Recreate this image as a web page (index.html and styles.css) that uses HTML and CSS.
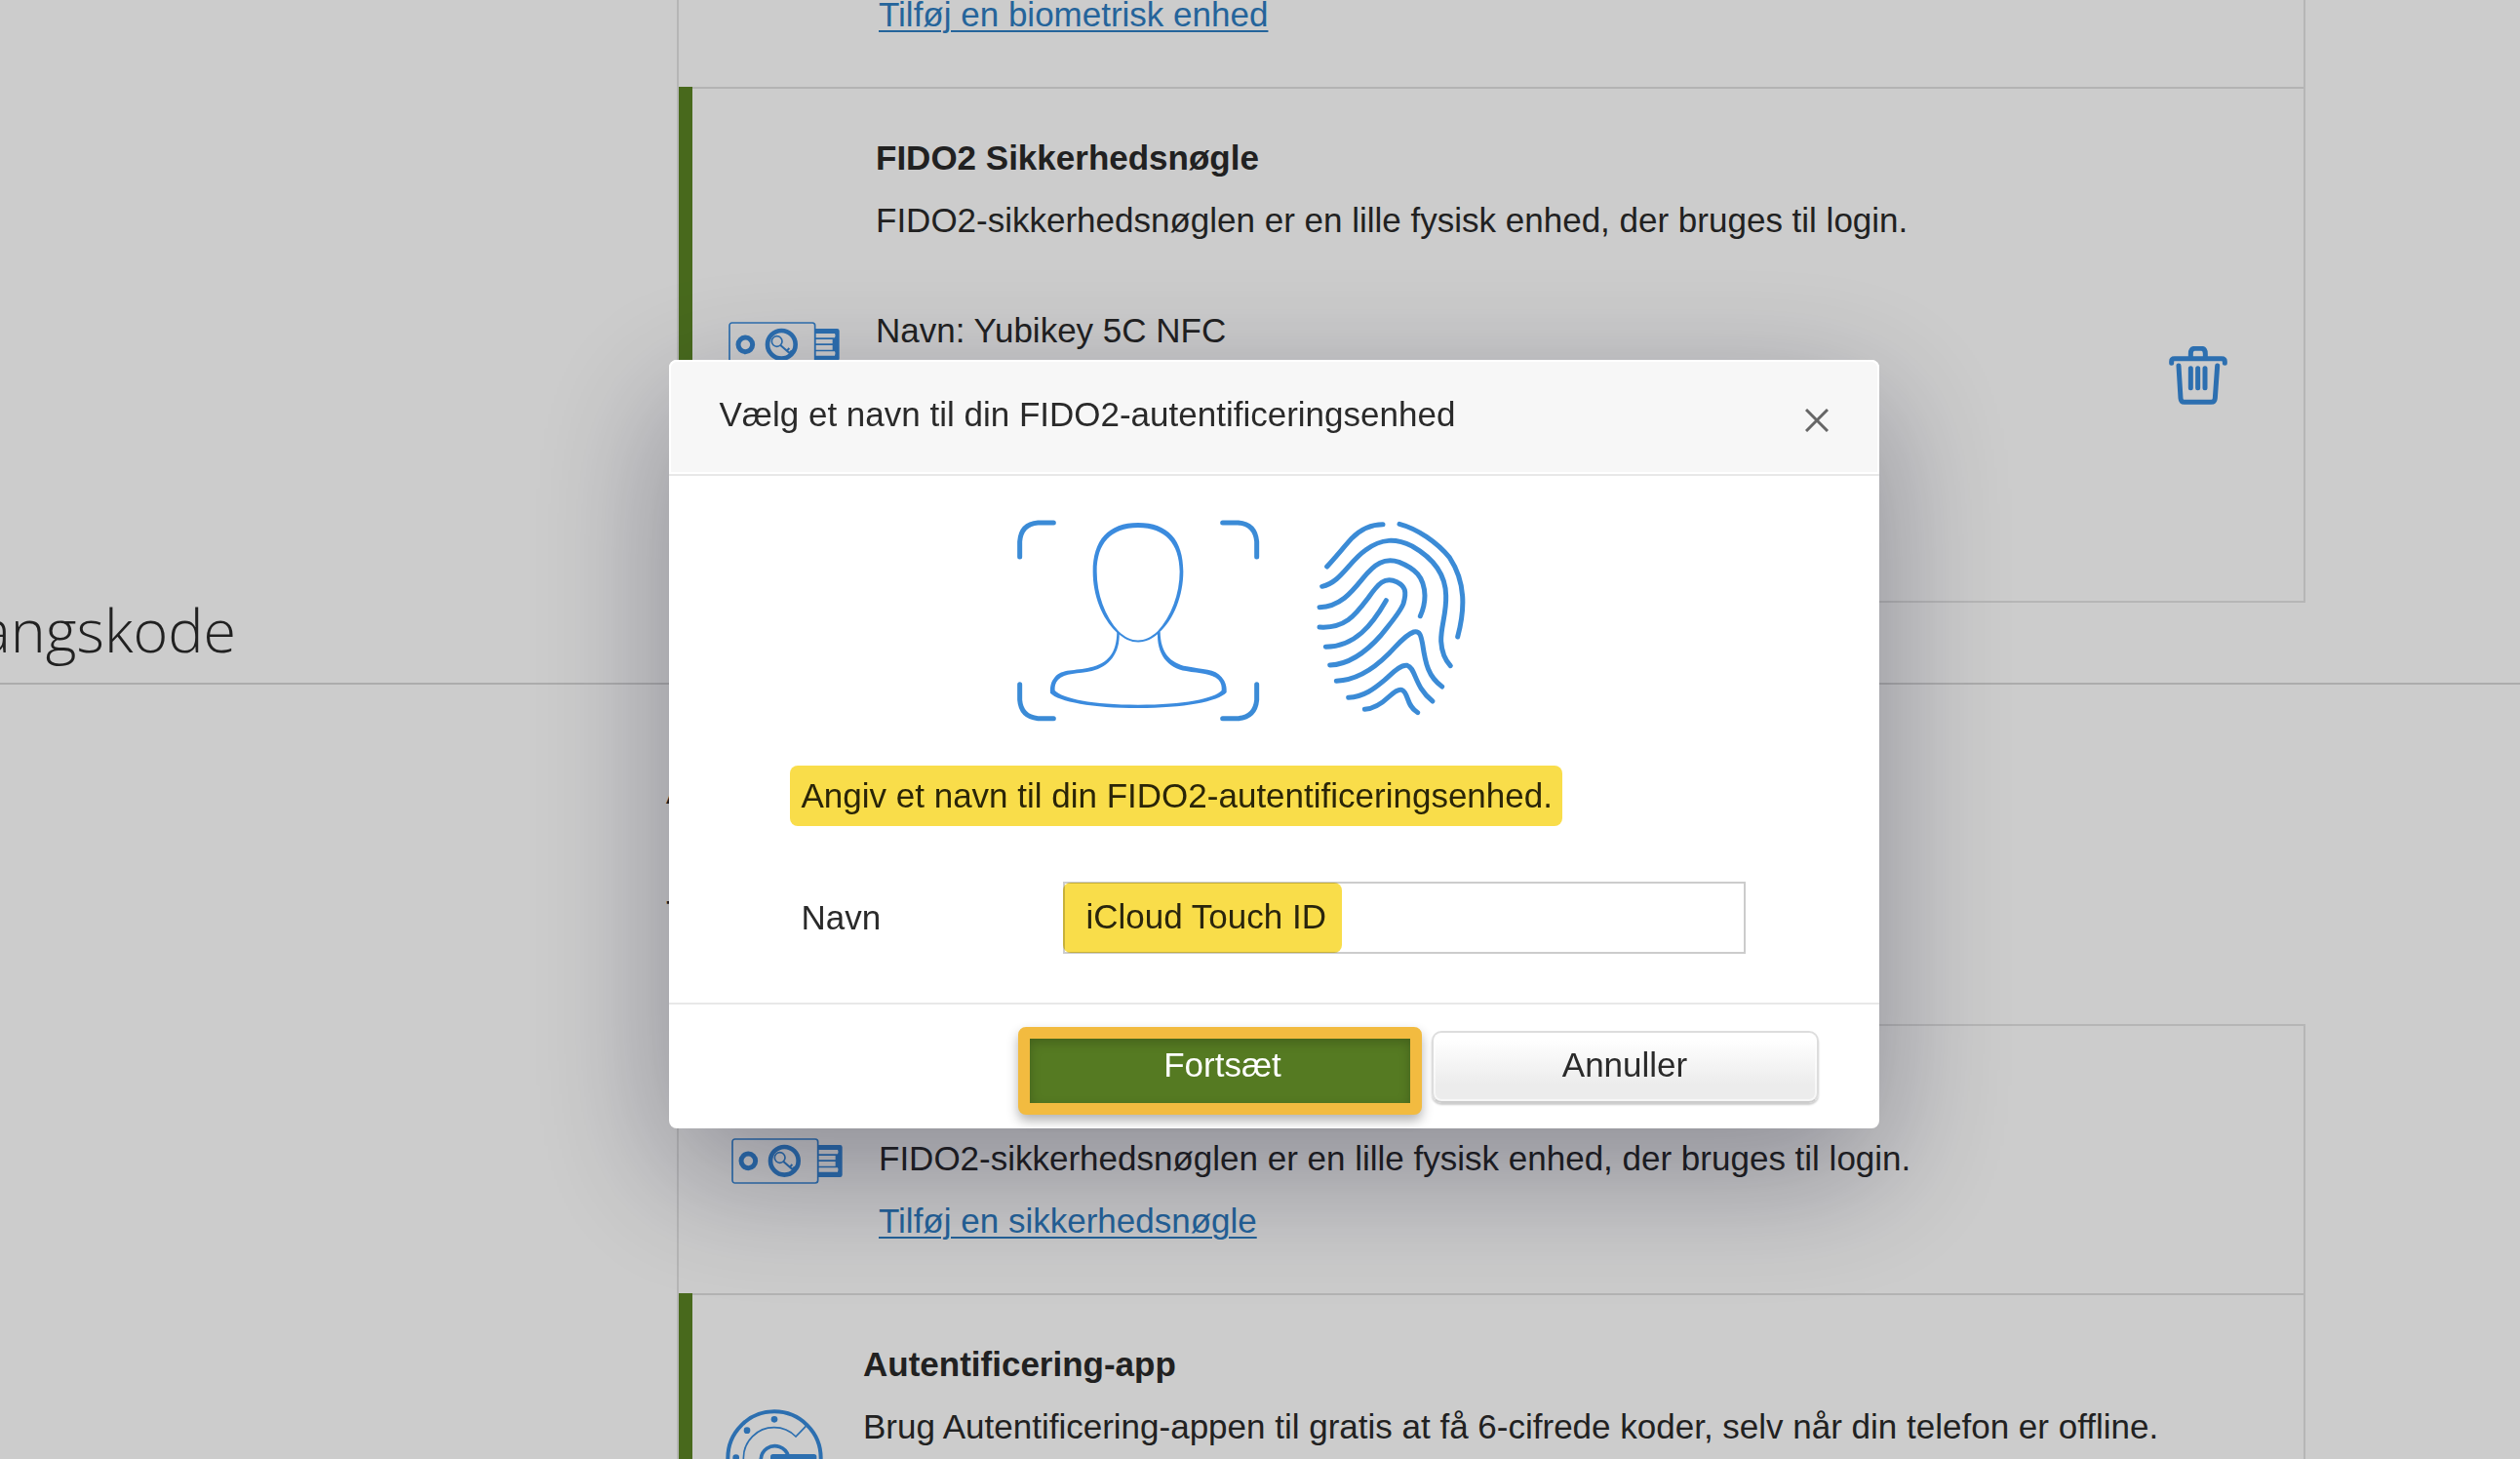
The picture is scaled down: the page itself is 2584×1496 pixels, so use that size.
FILE: index.html
```html
<!DOCTYPE html>
<html lang="da">
<head>
<meta charset="utf-8">
<title>FIDO2-autentificeringsenhed</title>
<link rel="stylesheet" href="styles.css">
</head>
<body>
<svg class="defs" aria-hidden="true">
  <symbol id="security-key" viewBox="0 0 342 141">
    <g fill="none" stroke="currentColor">
      <rect x="3" y="3" width="263" height="135" rx="8" stroke-width="5"/>
      <circle cx="52" cy="70" r="22" stroke-width="15"/>
      <circle cx="163" cy="70" r="43" stroke-width="14"/>
      <circle cx="149" cy="60" r="16" stroke-width="5"/>
      <path d="M160 72L190 98M180 89l7-8M187 96l8-8" stroke-width="6"/>
    </g>
    <path fill="currentColor" fill-rule="evenodd" d="M266 21h68q7 0 7 7v85q0 7-7 7h-68zM268 36v13h59q4-6 0-13zM268 54v13h52v-13zM268 72v14h52v-14zM268 91v13h59q4-6 0-13z"/>
  </symbol>
</svg>

<main class="page">
  <section class="card">
    <article class="method">
      <div class="method-icon"></div>
      <div class="method-text">
        <p><a href="#">Tilføj en biometrisk enhed</a></p>
      </div>
    </article>
    <article class="method active registered">
      <svg class="key-icon" aria-hidden="true"><use href="#security-key"/></svg>
      <div class="method-text">
        <h3>FIDO2 Sikkerhedsnøgle</h3>
        <p>FIDO2-sikkerhedsnøglen er en lille fysisk enhed, der bruges til login.</p>
        <p class="device">Navn: Yubikey 5C NFC</p>
      </div>
      <button class="delete" type="button" aria-label="Slet">
        <svg viewBox="0 0 180 180" aria-hidden="true">
          <g fill="none" stroke="currentColor" stroke-linecap="round" stroke-width="15">
            <path d="M8 52v-5q0-9 9-9H162q10 0 10 9v5" />
            <path d="M67 34V23q0-16 13-16h20q12 0 12 16v11"/>
            <path d="M30 60L36 160q1 12 11 12h83q11 0 12-12L149 60"/>
            <path d="M67 68v60M89 68v60M111 68v60"/>
          </g>
        </svg>
      </button>
    </article>
  </section>

  <header class="section-head"><h2>angskode</h2></header>
  <div class="section-intro">
    <p>A</p>
    <p>T</p>
  </div>

  <section class="card bordered">
    <article class="method available">
      <svg class="key-icon" aria-hidden="true"><use href="#security-key"/></svg>
      <div class="method-text">
        <p>FIDO2-sikkerhedsnøglen er en lille fysisk enhed, der bruges til login.</p>
        <p><a href="#">Tilføj en sikkerhedsnøgle</a></p>
      </div>
    </article>
    <article class="method active app">
      <svg class="app-icon" viewBox="0 0 300 300" aria-hidden="true">
        <g fill="none" stroke="currentColor">
          <circle cx="150" cy="150" r="143" stroke-width="12"/>
          <path d="M247 52L216 84A94 94 0 1 0 216 216" stroke-width="5"/>
          <path d="M193 144A43 43 0 1 0 193 168" stroke-width="11"/>
        </g>
        <g fill="currentColor">
          <circle cx="150" cy="31" r="10"/><circle cx="66" cy="65" r="10"/>
          <circle cx="32" cy="149" r="10"/><circle cx="66" cy="233" r="10"/>
          <rect x="138" y="138" width="142" height="28" rx="8"/>
        </g>
      </svg>
      <div class="method-text">
        <h3>Autentificering-app</h3>
        <p>Brug Autentificering-appen til gratis at få 6-cifrede koder, selv når din telefon er offline.</p>
      </div>
    </article>
  </section>
</main>

<div class="overlay">
  <form class="dialog" role="dialog" aria-labelledby="dialog-title">
    <header class="dialog-head">
      <h1 id="dialog-title">Vælg et navn til din FIDO2-autentificeringsenhed</h1>
      <button class="close" type="button" aria-label="Luk">
        <svg viewBox="0 0 24 24" aria-hidden="true"><path d="M1 1L23 23M23 1L1 23" fill="none" stroke="currentColor" stroke-width="3"/></svg>
      </button>
    </header>
    <div class="dialog-body">
      <svg class="biometrics" viewBox="70 67 1380 624" aria-hidden="true">
        <g fill="none" stroke="#3b8bd6" stroke-width="15" stroke-linecap="round" stroke-linejoin="round">
          <path d="M78 181V134Q82 80 134 76H182M702 76H750Q802 80 807 134V181M807 573V621Q802 673 750 678H702M182 678H134Q82 673 78 621V573"/>
          <path d="M1023 211C1050 181 1075 151 1100 123C1130 93 1160 81 1195 81M1246 80C1300 94 1362 136 1400 183C1450 259 1448 340 1425 427"/>
          <path d="M1008 272C1065 260 1090 196 1142 160C1192 123 1235 124 1285 148C1350 185 1388 236 1389 300C1391 355 1373 395 1374 440C1376 475 1388 500 1403 516"/>
          <path d="M1000 336C1062 335 1098 291 1132 249C1170 201 1200 183 1245 197C1294 217 1322 241 1324 300C1324 325 1319 343 1310 363"/>
          <path d="M1000 397C1080 402 1110 360 1150 307C1180 264 1200 240 1238 258C1264 271 1269 288 1258 325C1248 352 1215 389 1190 421C1140 478 1090 512 1032 514"/>
          <path d="M1019 458C1110 457 1162 390 1205 315M1052 563C1116 560 1168 524 1210 482C1236 457 1262 421 1290 412C1310 408 1312 424 1317 449C1326 510 1335 550 1377 580"/>
          <path d="M1089 614C1137 611 1169 586 1200 560C1226 537 1249 512 1270 515C1296 522 1292 582 1348 625M1139 650C1172 648 1195 629 1215 610C1228 598 1244 585 1255 591C1274 600 1267 640 1302 660"/>
        </g>
        <g fill="#3b8bde" fill-rule="evenodd">
          <path d="M442 76C535 76 581 130 581 226C581 300 552 373 508 413C466 454 419 454 375 412C331 370 303 300 303 226C303 130 350 76 442 76ZM442 91C358 91 315 140 315 226C315 295 340 364 382 410C421 447 462 447 502 410C544 364 570 295 570 226C569 140 525 91 442 91Z"/>
          <path d="M377 411L384 414C387 478 353 518 300 532C259 541 215 538 196 559C187 568 185 580 186 592C209 617 302 636 442 636C582 636 677 617 699 592C700 580 698 568 689 559C669 539 632 540 590 532C532 523 499 480 502 411L510 411C511 475 540 507 592 518C640 528 679 525 699 551C712 566 715 583 714 598C689 626 582 646 442 646C302 646 197 626 172 600C171 583 173 566 186 551C207 525 248 533 295 521C349 508 376 477 377 411Z"/>
        </g>
      </svg>
      <p class="prompt">Angiv et navn til din FIDO2-autentificeringsenhed.</p>
      <div class="field">
        <label for="device-name">Navn</label>
        <div class="input-wrap">
          <input id="device-name" type="text" value="iCloud Touch ID">
          <span class="marker"></span>
        </div>
      </div>
    </div>
    <footer class="dialog-foot">
      <button class="primary" type="submit">Fortsæt</button>
      <button class="secondary" type="button">Annuller</button>
    </footer>
  </form>
</div>
</body>
</html>
```

FILE: styles.css
```css
* { box-sizing: border-box; }

html, body { height: 100%; }

body {
  margin: 0;
  overflow: hidden;
  background: #fff;
  color: #2a2a2a;
  font: 35px/64px "Liberation Sans", Arial, sans-serif;
}

h1, h2, h3, p { margin: 0; font-size: inherit; }
h1 { font-weight: 400; }
button, input { font: inherit; color: inherit; }
svg { display: block; flex: none; }
a { color: #2e7dc2; text-decoration-thickness: 2px; text-underline-offset: 4px; }
.defs { position: absolute; width: 0; height: 0; }

/* Page behind the dialog */
.page { height: 100%; overflow: hidden; }

.card {
  margin: 0 220px 0 694px;
  border: solid #e4e4e4;
  border-width: 0 2px 2px;
}
.card.bordered { border-top-width: 2px; }

.method {
  display: flex;
  align-items: flex-start;
  gap: 37px;
  padding: 41px 78px 42px 54px;
}
.method.active {
  padding-left: 37px;
  border-left: 14px solid #5a8424;
  box-shadow: inset 0 2px #e0e0e0;
}
.card:first-child .method:first-child { padding-top: 0; margin-top: -17px; }
.method-text { flex: 1; white-space: nowrap; }
.method-icon { width: 114px; }
.key-icon { width: 114px; height: 47px; color: #388bdc; }
.registered { min-height: 527px; }
.registered .key-icon { margin-top: 200px; }
.device { margin-top: 49px; }
.method.available { padding-top: 104px; }
.available .key-icon { margin-top: 11px; }
.method.app { gap: 41px; padding-left: 34px; }
.app-icon { width: 100px; height: 100px; margin-top: 78px; color: #388bdc; }

.delete {
  margin: 225px 0 0;
  padding: 0;
  border: 0;
  background: none;
  color: #388bdc;
}
.delete svg { width: 60px; height: 60px; }

.section-head { border-bottom: 2px solid #d8d8d8; }
.section-head h2 {
  display: flex;
  justify-content: flex-end;
  width: 242px;
  padding-bottom: 26px;
  font: 300 61px/56px "Open Sans", "Noto Sans", sans-serif;
}
.section-intro { margin: 78px 220px 82px 683px; }
.section-intro p + p { margin-top: 60px; }

/* Dialog */
.overlay {
  position: fixed;
  inset: 0;
  display: grid;
  place-items: center;
  padding: 29px 0 0 28px;
  background: rgba(0, 0, 0, .2);
}
.dialog {
  width: 1241px;
  max-width: 100%;
  border-radius: 8px;
  background: #fff;
  box-shadow: 0 44px 140px rgba(10, 10, 35, .34);
}
.dialog-head {
  display: flex;
  justify-content: space-between;
  align-items: center;
  padding: 22px 50px 27px;
  border: 2px solid #fff;
  border-radius: 8px 8px 0 0;
  background: #f7f7f7;
  box-shadow: 0 2px #e8e8e8;
}
.close { padding: 12px 0 0; border: 0; background: none; color: #666; }
.close svg { width: 24px; height: 24px; }
.dialog-body { padding: 47px 124px 50px; }
.biometrics { width: 460px; height: 208px; margin: 0 auto 44px 233px; }
.prompt {
  width: fit-content;
  padding: 0 10px 0 12px;
  border-radius: 8px;
  background: #f9dd4a;
  color: #2a2508;
  line-height: 62px;
}
.field {
  display: grid;
  grid-template-columns: 268px 700px;
  align-items: center;
  margin-top: 57px;
  padding-left: 12px;
}
.input-wrap { position: relative; }
.input-wrap input {
  display: block;
  width: 100%;
  height: 74px;
  padding: 0 22px 2px;
  border: 2px solid #ccc;
  border-radius: 0;
  background: #fff;
}
.marker {
  position: absolute;
  inset: 1px auto 1px 0;
  width: 286px;
  border-radius: 8px;
  background: #f9dd4a;
  mix-blend-mode: multiply;
}
.dialog-foot {
  display: flex;
  justify-content: flex-end;
  align-items: flex-start;
  gap: 10px;
  height: 129px;
  padding: 23px 62px 0;
  border-top: 2px solid #e8e8e8;
}
.dialog-foot button { line-height: 48px; }
.primary {
  width: 414px;
  height: 90px;
  padding: 0 0 12px 6px;
  border: 12px solid #f2bb40;
  border-radius: 8px;
  background: #557a22;
  box-shadow: 0 6px 12px rgba(0, 0, 0, .3), inset 0 4px 12px rgba(0, 0, 0, .2);
}
.dialog-foot .primary { color: #fff; }
.secondary {
  width: 397px;
  height: 74px;
  margin-top: 4px;
  padding: 0 0 4px;
  border: 2px solid #ddd;
  border-bottom-color: #ccc;
  border-radius: 10px;
  background: linear-gradient(#fff 10%, #ececec 75%);
  box-shadow: 0 2px 2px rgba(0, 0, 0, .2), inset 0 0 0 2px rgba(255, 255, 255, .6);
}
```
